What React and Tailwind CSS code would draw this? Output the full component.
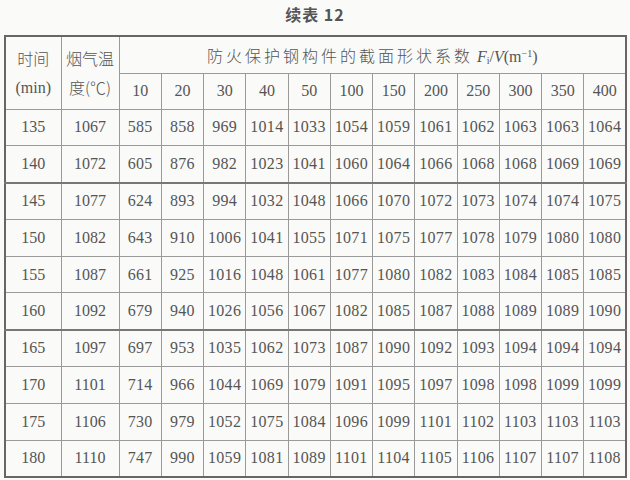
const sizes = [10, 20, 30, 40, 50, 100, 150, 200, 250, 300, 350, 400];

const rows = [
  [135, 1067, [585, 858, 969, 1014, 1033, 1054, 1059, 1061, 1062, 1063, 1063, 1064]],
  [140, 1072, [605, 876, 982, 1023, 1041, 1060, 1064, 1066, 1068, 1068, 1069, 1069]],
  [145, 1077, [624, 893, 994, 1032, 1048, 1066, 1070, 1072, 1073, 1074, 1074, 1075]],
  [150, 1082, [643, 910, 1006, 1041, 1055, 1071, 1075, 1077, 1078, 1079, 1080, 1080]],
  [155, 1087, [661, 925, 1016, 1048, 1061, 1077, 1080, 1082, 1083, 1084, 1085, 1085]],
  [160, 1092, [679, 940, 1026, 1056, 1067, 1082, 1085, 1087, 1088, 1089, 1089, 1090]],
  [165, 1097, [697, 953, 1035, 1062, 1073, 1087, 1090, 1092, 1093, 1094, 1094, 1094]],
  [170, 1101, [714, 966, 1044, 1069, 1079, 1091, 1095, 1097, 1098, 1098, 1099, 1099]],
  [175, 1106, [730, 979, 1052, 1075, 1084, 1096, 1099, 1101, 1102, 1103, 1103, 1103]],
  [180, 1110, [747, 990, 1059, 1081, 1089, 1101, 1104, 1105, 1106, 1107, 1107, 1108]],
];

const groupStart = [2, 6];

const cell = "border border-[#9a9a9a] text-center p-0 font-['Liberation_Serif',serif]";
const cjk = "font-['Noto_Sans_CJK_SC',sans-serif] font-light";

export default function App() {
  return (
    <div className="w-[630px] h-[480px] bg-[#fafaf8] text-[#555] overflow-hidden font-['Liberation_Serif',serif]">
      <div className="h-[35px] flex items-center justify-center pb-[8px]">
        <span className="text-[16px] font-bold text-[#555] tracking-[1px] font-['Noto_Sans_CJK_SC',sans-serif]">
          续表 12
        </span>
      </div>
      <table className="ml-[4px] w-[623px] table-fixed border-collapse border-2 border-[#666] text-[16px] leading-none">
        <colgroup>
          <col className="w-[56px]" />
          <col className="w-[58px]" />
          {sizes.map((s) => (
            <col key={s} />
          ))}
        </colgroup>
        <thead>
          <tr className="h-[37px]">
            <th rowSpan={2} className={cell + " font-normal"}>
              <div className="leading-[29px]">
                <div className={cjk}>时间</div>
                <div>(min)</div>
              </div>
            </th>
            <th rowSpan={2} className={cell + " font-normal"}>
              <div className={"leading-[29px] " + cjk}>
                <div>烟气温</div>
                <div>度(℃)</div>
              </div>
            </th>
            <th colSpan={12} className={cell + " font-normal pt-[2px]"}>
              <span className={cjk + " tracking-[3px]"}>防火保护钢构件的截面形状系数</span>{" "}
              <i>F</i>
              <sub className="text-[10px]">i</sub>/<i>V</i>(m
              <sup className="text-[10px]">−1</sup>)
            </th>
          </tr>
          <tr className="h-[36px]">
            {sizes.map((s) => (
              <th key={s} className={cell + " font-normal"}>
                {s}
              </th>
            ))}
          </tr>
        </thead>
        <tbody>
          {rows.map(([t, temp, vals], i) => {
            const top = groupStart.includes(i) ? " border-t-2 border-t-[#777]" : "";
            return (
              <tr key={t} className="h-[36.8px]">
                <td className={cell + top}>{t}</td>
                <td className={cell + top}>{temp}</td>
                {vals.map((v, j) => (
                  <td key={j} className={cell + top + " tracking-[0.3px]"}>
                    {v}
                  </td>
                ))}
              </tr>
            );
          })}
        </tbody>
      </table>
    </div>
  );
}
